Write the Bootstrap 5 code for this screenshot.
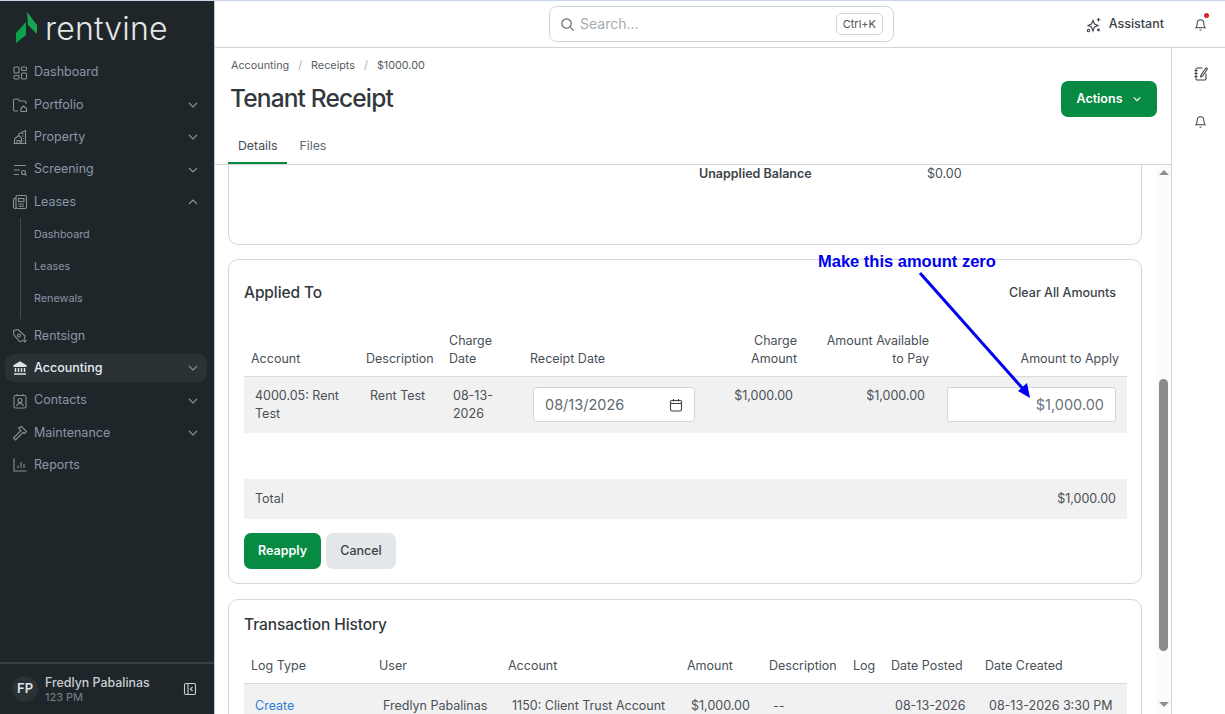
<!DOCTYPE html>
<html lang="en">
<head>
<meta charset="UTF-8">
<meta name="viewport" content="width=device-width, initial-scale=1.0">
<title>Tenant Receipt</title>
<link href="https://cdn.jsdelivr.net/npm/bootstrap@5.3.2/dist/css/bootstrap.min.css" rel="stylesheet">
<style>
html, body { height: 100%; overflow: hidden; }
body { font-family: Inter, "Liberation Sans", sans-serif; font-size: 13px; color: #343a40; background: #fff; }
svg { display: block; flex: none; }
.shell { height: 714px; border-top: 1px solid #c9d6e6; }
/* sidebar */
.side { width: 215px; flex: none; background: #1f262a; border-right: 1px solid #c8c8c8; color: #8a97a6; }
.brand { height: 49px; padding: 10px 0 0 15px; gap: 5px; color: #e4e6e8; font-size: 32px; font-weight: 300; line-height: 36px; letter-spacing: .2px; }
.side-item { height: 28px; margin: 0 7px 4.3px 5px; padding: 0 8px 0 7px; gap: 6px; font-size: 12.5px; border-radius: 9px; }
.side-item.first-item { margin-top: 8.7px; }
.side-item.on { background: #2a3236; color: #e6edf3; font-weight: 500; }
.side-item .caret { margin-left: auto; }
.side-sub { margin: -2px 0 3px 20px; border-left: 1px solid #434b50; padding: 1px 0 0 13px; height: 101px; font-size: 10.8px; }
.side-sub div { height: 32px; line-height: 32px; }
.side-foot { margin-top: auto; border-top: 2px solid #3a4145; height: 52px; padding: 0 17px 0 12px; gap: 7px; }
.avatar { width: 26px; height: 26px; border-radius: 50%; background: #2a3236; color: #dfe3e6; font-size: 13px; font-weight: 600; }
.foot-name { color: #c9ced2; font-size: 12.4px; line-height: 15px; font-weight: 500; }
.foot-sub { color: #79838c; font-size: 11px; line-height: 14px; }
/* top bar */
.topbar { height: 47px; flex: none; border-bottom: 1px solid #d4d4d4; padding-right: 17px; }
.searchbox { width: 345px; height: 36px; margin-left: 334px; border: 1px solid #d2d5d8; border-radius: 8px; padding: 0 10px; gap: 5px; color: #a3abb2; font-size: 14px; line-height: 18px; }
.search-hint { padding-bottom: 1px; }
.kbd-box { margin-left: auto; border: 1px solid #d2d5d8; border-radius: 5px; padding: 0 6px; height: 22px; line-height: 20px; font-size: 11px; color: #495057; }
.assist { margin-left: auto; gap: 7px; font-size: 12.5px; font-weight: 500; color: #3c4349; padding-top: 1px; }
.bell-wrap { position: relative; margin-left: 29px; }
.bell-dot { position: absolute; top: -3px; right: -1px; width: 5px; height: 5px; border-radius: 50%; background: #d4242b; }
/* page head */
.page-head { height: 117px; flex: none; border-bottom: 1px solid #d4d4d4; padding: 0 14px 0 15px; position: relative; }
.crumbs { font-size: 10.8px; color: #555d64; padding: 10px 0 0 1px; line-height: 15px; gap: 9px; }
.crumbs i { color: #a3a9ae; font-style: normal; }
.page-title { font-size: 24.5px; font-weight: 500; letter-spacing: -.85px; color: #32383d; margin: 10px 0 0; line-height: 30px; }
.btn-act { background: #078a42; color: #fff; font-size: 12.5px; font-weight: 600; border: 0; height: 36px; width: 96px; border-radius: 7px; gap: 9px; margin-top: 33px; }
.tabs-row { gap: 0; margin-top: 14px; margin-left: -2px; font-size: 12.3px; }
.tab-item { height: 37px; padding: 11px 10px 0; color: #626a71; line-height: 16px; margin-right: 2px; }
.tab-item.on { color: #454c52; border-bottom: 2px solid #078a42; }
/* right rail */
.rail { width: 54px; flex: none; border-left: 1px solid #d4d4d4; padding: 18px 0 0 4px; gap: 31px; }
/* content */
.content-wrap { min-height: 0; position: relative; }
.content { padding: 0 14px 0 13px; overflow: hidden; min-width: 0; }
.panel { border: 1px solid #d5d8da; border-radius: 10px; margin-bottom: 15px; flex: none; }
.panel-cut { height: 80px; margin-bottom: 14px; border-top: 0; border-top-left-radius: 0; border-top-right-radius: 0; padding-top: 1px; position: relative; font-size: 12.5px; line-height: 16px; }
.bal-label { width: 228px; margin-left: 470px; font-weight: 600; color: #3c4349; }
.bal-val { color: #495057; }
.panel-body { padding: 0 14px 0 15px; }
.panel-head { height: 72px; padding-bottom: 5px; }
.panel-title { font-size: 15.5px; font-weight: 500; color: #32383d; margin: 0; letter-spacing: -.1px; }
.clear-link { font-size: 12.5px; font-weight: 500; color: #3c4349; padding-right: 11px; }
.tbl { table-layout: fixed; width: 883px; font-size: 12.5px; line-height: 18px; margin: 0; color: #495057; border-collapse: collapse; }
.tbl th { font-weight: 400; vertical-align: bottom; padding: 0 7px 8px; border-bottom: 1px solid #d8dadc; color: #495057; }
.tbl td { background: #f1f1f1; vertical-align: top; padding: 10px 11px 0; border: 0; color: #495057; }
.tbl td.date-cell { padding-left: 10px; }
.tbl th.narrow-head { padding-left: 20px; }
.tbl th.last-head { padding-right: 8px; }
.tbl .r { text-align: right; }
.date-box { width: 162px; height: 35px; background: #fff; border: 1px solid #d2d5d8; border-radius: 4px; padding: 0 11px; font-size: 14.5px; color: #626a71; }
.amt-box { height: 35px; background: #fff; border: 1px solid #d2d5d8; border-radius: 3px; padding: 0 11px; font-size: 14.5px; color: #6c757d; }
.total-bar { background: #f1f1f1; height: 40px; margin-top: 46px; padding: 1px 11px 0; font-size: 12.5px; color: #495057; }
.btn-row { margin: 14px 0 14px; gap: 5px; }
.btn-re { background: #078a42; color: #fff; border: 0; font-size: 12.5px; font-weight: 600; width: 77px; height: 36px; border-radius: 7px; padding: 1px 0 0; }
.btn-ca { background: #e4e7e9; color: #3c4349; border: 0; font-size: 12.5px; font-weight: 500; width: 70px; height: 36px; border-radius: 7px; padding: 1px 0 0; }
.hist-head { height: 52px; margin-bottom: 5px; }
.log-row td { height: 44px; padding: 13px 11px 0; white-space: nowrap; }
.log-tbl th { white-space: nowrap; }
.log-link { color: #2f7fd1; text-decoration: none; }
/* scrollbar */
.sbar { width: 15px; flex: none; background: #fbfbfb; height: 549px; padding-top: 5px; }
.sbar-up { width: 0; height: 0; border: 5px solid transparent; border-top: 0; border-bottom: 5px solid #8f8f8f; margin: 0 auto; }
.sbar-thumb { width: 9px; height: 272px; background: #8a8a8a; border-radius: 5px; margin: 204px auto 51px; }
.sbar-down { width: 0; height: 0; border: 5px solid transparent; border-bottom: 0; border-top: 5px solid #8f8f8f; margin: 0 auto; }
/* annotation */
.note { position: absolute; left: 603px; top: 86px; color: #0000f0; font: 700 16.5px "Liberation Sans", sans-serif; line-height: 20px; white-space: nowrap; }
.note-arrow { position: absolute; left: 690px; top: 104px; }
</style>
</head>
<body>
<div class="shell d-flex">
    <!-- sidebar -->
    <div class="side d-flex flex-column">
        <div class="brand d-flex align-items-start">
            <svg width="25" height="33" viewBox="0 0 25 33"><path d="M12 1 L22 14 L22 23 L13 14 Z" fill="#17a650"/><path d="M11 11 L11 24 L1 32 L1 22 Z" fill="#0ba24c"/></svg>
            <span>rentvine</span>
        </div>
        <div class="side-item first-item d-flex align-items-center">
            <svg width="16" height="16" viewBox="0 0 16 16" fill="none" stroke="#8a8f94" stroke-width="1.1"><rect x="2" y="2" width="5" height="6" rx="1"/><rect x="9.5" y="2" width="5" height="3.5" rx="1"/><rect x="2" y="10.5" width="5" height="3.5" rx="1"/><rect x="9.5" y="8" width="5" height="6" rx="1"/></svg>
            <span>Dashboard</span>
        </div>
        <div class="side-item d-flex align-items-center">
            <svg width="16" height="16" viewBox="0 0 16 16" fill="none" stroke="#8a8f94" stroke-width="1.1"><path d="M6 14H3a1.5 1.5 0 0 1-1.5-1.5v-9A1.5 1.5 0 0 1 3 2h3l1.5 2h5A1.5 1.5 0 0 1 14 5.5V7"/><path d="M9 11.5l2.5-2.5 3 2.5V14.5H9z"/></svg>
            <span>Portfolio</span>
            <svg class="caret" width="12" height="12" viewBox="0 0 12 12" fill="none" stroke="#8a8f94" stroke-width="1.2"><path d="M2 4l4 4 4-4"/></svg>
        </div>
        <div class="side-item d-flex align-items-center">
            <svg width="16" height="16" viewBox="0 0 16 16" fill="none" stroke="#8a8f94" stroke-width="1.1"><path d="M1.5 14.5h13M2.500 14.500V10l4-3.500 3 2.500v5.500M7 7V4.500L13.500 1.500V14.500M5 14.500v-3h3v3M9.500 4.500h2M10 7h1.500M11 9.500h.8M11 12h.8"/></svg>
            <span>Property</span>
            <svg class="caret" width="12" height="12" viewBox="0 0 12 12" fill="none" stroke="#8a8f94" stroke-width="1.2"><path d="M2 4l4 4 4-4"/></svg>
        </div>
        <div class="side-item d-flex align-items-center">
            <svg width="16" height="16" viewBox="0 0 16 16" fill="none" stroke="#8a8f94" stroke-width="1.1"><path d="M2 3.500h12M2 8h6M2 12.500h5"/><circle cx="11.500" cy="10.500" r="2"/><path d="M13 12l1.500 1.500"/></svg>
            <span>Screening</span>
            <svg class="caret" width="12" height="12" viewBox="0 0 12 12" fill="none" stroke="#8a8f94" stroke-width="1.2"><path d="M2 4l4 4 4-4"/></svg>
        </div>
        <div class="side-item d-flex align-items-center">
            <svg width="16" height="16" viewBox="0 0 16 16" fill="none" stroke="#8a8f94" stroke-width="1.1"><rect x="4" y="1.500" width="10.500" height="13" rx="1.500"/><path d="M4 4.500H2.500A1 1 0 0 0 1.500 5.500v7.500a1.500 1.500 0 0 0 2.500 1"/><path d="M6.500 4.500h5.500v3H6.500zM6.500 10h5.500M6.500 12.300h5.500"/></svg>
            <span>Leases</span>
            <svg class="caret" width="12" height="12" viewBox="0 0 12 12" fill="none" stroke="#8a8f94" stroke-width="1.2"><path d="M2 8l4-4 4 4"/></svg>
        </div>
        <div class="side-sub">
            <div>Dashboard</div>
            <div>Leases</div>
            <div>Renewals</div>
        </div>
        <div class="side-item d-flex align-items-center">
            <svg width="16" height="16" viewBox="0 0 16 16" fill="none" stroke="#8a8f94" stroke-width="1.1"><path d="M1.500 2.500l4.500-1 7 6.500-1 4.500-4.500 1-5.500-6.500z"/><circle cx="7" cy="7.500" r="1.500"/><path d="M12 14.500l2.500-2.500"/></svg>
            <span>Rentsign</span>
        </div>
        <div class="side-item on d-flex align-items-center">
            <svg width="16" height="16" viewBox="0 0 16 16" fill="none" stroke="#dfe3e6" stroke-width="1.2"><path d="M2 5.500L8 2l6 3.500v1H2z" fill="#dfe3e6"/><path d="M3.500 8v4M6.500 8v4M9.500 8v4M12.500 8v4M2 14h12" stroke-width="1.500"/></svg>
            <span>Accounting</span>
            <svg class="caret" width="12" height="12" viewBox="0 0 12 12" fill="none" stroke="#8a8f94" stroke-width="1.2"><path d="M2 4l4 4 4-4"/></svg>
        </div>
        <div class="side-item d-flex align-items-center">
            <svg width="16" height="16" viewBox="0 0 16 16" fill="none" stroke="#8a8f94" stroke-width="1.1"><rect x="2" y="2.500" width="12" height="12.500" rx="1.500"/><path d="M5 1v2M11 1v2"/><circle cx="8" cy="7.500" r="2"/><path d="M4.500 13c.5-2 2-2.500 3.500-2.500s3 .5 3.500 2.500"/></svg>
            <span>Contacts</span>
            <svg class="caret" width="12" height="12" viewBox="0 0 12 12" fill="none" stroke="#8a8f94" stroke-width="1.2"><path d="M2 4l4 4 4-4"/></svg>
        </div>
        <div class="side-item d-flex align-items-center">
            <svg width="16" height="16" viewBox="0 0 16 16" fill="none" stroke="#8a8f94" stroke-width="1.1"><path d="M6.500 3l3-1.500 5 5-2 2-1.500-1-7.500 7.500-2-2 7.500-7.500z"/></svg>
            <span>Maintenance</span>
            <svg class="caret" width="12" height="12" viewBox="0 0 12 12" fill="none" stroke="#8a8f94" stroke-width="1.2"><path d="M2 4l4 4 4-4"/></svg>
        </div>
        <div class="side-item d-flex align-items-center">
            <svg width="16" height="16" viewBox="0 0 16 16" fill="none" stroke="#8a8f94" stroke-width="1.1"><path d="M2 1.500v12.500h12.500M6 11V8.500M9 11V5M12 11V7"/></svg>
            <span>Reports</span>
        </div>
        <div class="side-foot d-flex align-items-center">
            <div class="avatar d-flex align-items-center justify-content-center">FP</div>
            <div class="flex-grow-1">
                <div class="foot-name">Fredlyn Pabalinas</div>
                <div class="foot-sub">123 PM</div>
            </div>
            <svg width="14" height="14" viewBox="0 0 14 14" fill="none" stroke="#c9ced2" stroke-width="1.1"><rect x="1.500" y="1.500" width="11" height="11" rx="1.500"/><path d="M5 1.500v11M9.500 5L7.500 7l2 2"/></svg>
        </div>
    </div>

    <!-- main -->
    <div class="flex-grow-1 d-flex flex-column" style="min-width:0">
        <div class="topbar d-flex align-items-center">
            <div class="searchbox d-flex align-items-center">
                <svg width="15" height="15" viewBox="0 0 16 16" fill="none" stroke="#5c646b" stroke-width="1.200"><circle cx="7" cy="7" r="5"/><path d="M11 11l3.500 3.500"/></svg>
                <span class="search-hint">Search...</span>
                <span class="kbd-box">Ctrl+K</span>
            </div>
            <div class="assist d-flex align-items-center">
                <svg width="16" height="16" viewBox="0 0 16 16" fill="none" stroke="#3c4349" stroke-width="1.100"><path d="M7 3.500l1.500 3.500 3.500 1.500-3.500 1.500L7 14 5.500 10 2 8.500 5.500 7z"/><path d="M12.500 1v3.500M10.800 2.800h3.500"/><circle cx="2.500" cy="13.500" r="1.200"/><circle cx="12.500" cy="13" r=".9"/></svg>
                <span>Assistant</span>
            </div>
            <div class="bell-wrap">
                <svg width="15" height="16" viewBox="0 0 16 16" fill="none" stroke="#3c4349" stroke-width="1.100"><path d="M3 12c1-1 1.500-2 1.500-5a3.500 3.500 0 0 1 7 0c0 3 .5 4 1.500 5z"/><path d="M7 14.500h2"/></svg>
                <span class="bell-dot"></span>
            </div>
        </div>
        <div class="flex-grow-1 d-flex" style="min-height:0">
            <div class="flex-grow-1 d-flex flex-column" style="min-width:0">
                <div class="page-head d-flex justify-content-between">
                    <div>
                        <div class="crumbs d-flex">
                            <span>Accounting</span><i>/</i><span>Receipts</span><i>/</i><span>$1000.00</span>
                        </div>
                        <h1 class="page-title">Tenant Receipt</h1>
                        <div class="tabs-row d-flex">
                            <div class="tab-item on">Details</div>
                            <div class="tab-item">Files</div>
                        </div>
                    </div>
                    <button class="btn-act d-flex align-items-center justify-content-center" type="button">
                        Actions
                        <svg width="10" height="10" viewBox="0 0 12 12" fill="none" stroke="#fff" stroke-width="1.300"><path d="M2 4l4 4 4-4"/></svg>
                    </button>
                </div>
                <div class="content-wrap flex-grow-1 d-flex">
                    <div class="content flex-grow-1 d-flex flex-column">
                        <div class="panel panel-cut d-flex">
                            <div class="bal-label">Unapplied Balance</div>
                            <div class="bal-val">$0.00</div>
                        </div>
                        <div class="panel panel-body">
                            <div class="panel-head d-flex align-items-center justify-content-between">
                                <h2 class="panel-title">Applied To</h2>
                                <span class="clear-link">Clear All Amounts</span>
                            </div>
                            <table class="tbl">
                                <colgroup>
                                    <col style="width:115px"><col style="width:83px"><col style="width:81px"><col style="width:182px"><col style="width:99px"><col style="width:132px"><col style="width:191px">
                                </colgroup>
                                <thead>
                                    <tr>
                                        <th>Account</th><th>Description</th><th>Charge Date</th><th>Receipt Date</th><th class="r">Charge Amount</th><th class="r narrow-head">Amount Available to Pay</th><th class="r last-head">Amount to Apply</th>
                                    </tr>
                                </thead>
                                <tbody>
                                    <tr style="height:56px">
                                        <td>4000.05: Rent Test</td>
                                        <td>Rent Test</td>
                                        <td>08-13-2026</td>
                                        <td class="date-cell">
                                            <div class="date-box d-flex align-items-center justify-content-between">
                                                <span>08/13/2026</span>
                                                <svg width="14" height="14" viewBox="0 0 14 14" fill="none" stroke="#3c4349" stroke-width="1.100"><rect x="1.500" y="2.500" width="11" height="10.500" rx="1.500"/><path d="M1.500 5.500h11M4.500 1v2.500M9.500 1v2.500"/></svg>
                                            </div>
                                        </td>
                                        <td class="r">$1,000.00</td>
                                        <td class="r">$1,000.00</td>
                                        <td><div class="amt-box d-flex align-items-center justify-content-end">$1,000.00</div></td>
                                    </tr>
                                </tbody>
                            </table>
                            <div class="total-bar d-flex align-items-center justify-content-between">
                                <span>Total</span><span>$1,000.00</span>
                            </div>
                            <div class="btn-row d-flex">
                                <button class="btn-re" type="button">Reapply</button>
                                <button class="btn-ca" type="button">Cancel</button>
                            </div>
                        </div>
                        <div class="panel panel-body">
                            <div class="hist-head d-flex align-items-center">
                                <h2 class="panel-title">Transaction History</h2>
                            </div>
                            <table class="tbl log-tbl">
                                <colgroup>
                                    <col style="width:128px"><col style="width:129px"><col style="width:179px"><col style="width:82px"><col style="width:84px"><col style="width:38px"><col style="width:94px"><col style="width:149px">
                                </colgroup>
                                <thead>
                                    <tr>
                                        <th>Log Type</th><th>User</th><th>Account</th><th>Amount</th><th>Description</th><th>Log</th><th>Date Posted</th><th>Date Created</th>
                                    </tr>
                                </thead>
                                <tbody>
                                    <tr class="log-row">
                                        <td><a class="log-link" href="#">Create</a></td>
                                        <td>Fredlyn Pabalinas</td>
                                        <td>1150: Client Trust Account</td>
                                        <td>$1,000.00</td>
                                        <td>--</td>
                                        <td></td>
                                        <td>08-13-2026</td>
                                        <td>08-13-2026 3:30 PM</td>
                                    </tr>
                                </tbody>
                            </table>
                        </div>
                    </div>
                    <div class="sbar">
                        <div class="sbar-up"></div>
                        <div class="sbar-thumb"></div>
                        <div class="sbar-down"></div>
                    </div>
                    <div class="note">Make this amount zero</div>
                    <svg class="note-arrow" width="130" height="140" viewBox="0 0 130 140">
                        <line x1="15" y1="4" x2="119" y2="121" stroke="#0000f0" stroke-width="3"/>
                        <path d="M125 129 L113 122 L122 114 Z" fill="#0000f0"/>
                    </svg>
                </div>
            </div>
            <div class="rail d-flex flex-column align-items-center">
                <svg width="16" height="16" viewBox="0 0 16 16" fill="none" stroke="#3c4349" stroke-width="1.100"><path d="M9.500 2H4.500A1.500 1.500 0 0 0 3 3.500v9A1.500 1.500 0 0 0 4.500 14h7a1.500 1.500 0 0 0 1.500-1.500V7.500"/><path d="M1.500 4.500h3M1.500 7.500h3M1.500 10.500h3M8 9l5-7 1.500 1-5 7-1.800.8z"/></svg>
                <svg width="15" height="16" viewBox="0 0 16 16" fill="none" stroke="#3c4349" stroke-width="1.100"><path d="M3 12c1-1 1.500-2 1.500-5a3.500 3.500 0 0 1 7 0c0 3 .5 4 1.500 5z"/><path d="M7 14.500h2"/></svg>
            </div>
        </div>
    </div>
</div>
<script src="https://cdn.jsdelivr.net/npm/bootstrap@5.3.2/dist/js/bootstrap.bundle.min.js"></script>
</body>
</html>
